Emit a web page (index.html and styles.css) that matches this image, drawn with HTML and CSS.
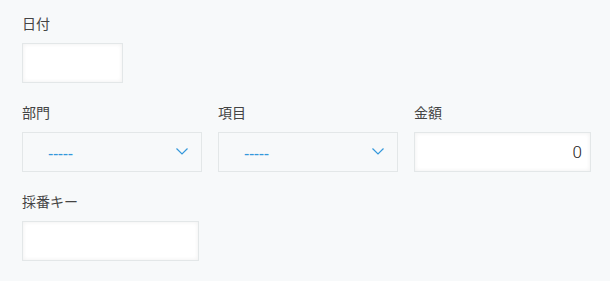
FILE: index.html
```html
<!DOCTYPE html>
<html lang="ja">
<head>
  <meta charset="UTF-8" />
  <meta name="viewport" content="width=device-width, initial-scale=1.0"/>
  <title>レコード編集</title>
  <link rel="stylesheet" href="styles.css">
</head>
<body>
  <div class="record">
    <div class="row">
      <div class="field">
        <div class="label">日付</div>
        <div class="input input-date"></div>
      </div>
    </div>

    <div class="row">
      <div class="field">
        <div class="label">部門</div>
        <div class="select">
          <span class="select-value">-----</span>
          <svg class="chevron" width="12" height="7" viewBox="0 0 12 7">
            <path d="M0.5 0.5 L6 6 L11.5 0.5" fill="none" stroke="#3498db" stroke-width="1.2"/>
          </svg>
        </div>
      </div>
      <div class="field">
        <div class="label">項目</div>
        <div class="select">
          <span class="select-value">-----</span>
          <svg class="chevron" width="12" height="7" viewBox="0 0 12 7">
            <path d="M0.5 0.5 L6 6 L11.5 0.5" fill="none" stroke="#3498db" stroke-width="1.2"/>
          </svg>
        </div>
      </div>
      <div class="field">
        <div class="label">金額</div>
        <div class="input input-number">0</div>
      </div>
    </div>

    <div class="row">
      <div class="field">
        <div class="label">採番キー</div>
        <div class="input input-text"></div>
      </div>
    </div>
  </div>
</body>
</html>
```

FILE: styles.css
```css
* {
  box-sizing: border-box;
}

body {
  margin: 0;
  background-color: #f7f9fa;
  font-family: 'Liberation Sans', 'Noto Sans CJK JP', sans-serif;
  color: #444;
}

.record {
  padding: 14px 22px 0;
}

.row {
  display: flex;
  gap: 16px;
  margin-bottom: 20px;
}

.label {
  font-size: 14px;
  line-height: 20px;
  margin-bottom: 9px;
}

.input {
  height: 40px;
  border: 1px solid #e3e7e8;
  background-color: #fff;
  box-shadow: inset 0 0 4px rgba(0, 0, 0, 0.07);
}

.input-date {
  width: 101px;
}

.input-text {
  width: 177px;
}

.input-number {
  width: 177px;
  padding: 0 8px;
  text-align: right;
  font-family: Roboto, 'Liberation Sans', sans-serif;
  font-weight: 300;
  font-size: 17px;
  line-height: 38px;
  color: #222;
}

.select {
  width: 180px;
  height: 40px;
  border: 1px solid #e3e7e8;
  background-color: #f7f9fa;
  display: flex;
  align-items: center;
  justify-content: space-between;
  padding: 0 13px 0 25px;
}

.select-value {
  color: #3498db;
  font-size: 16px;
  letter-spacing: -0.4px;
  line-height: 20px;
  padding-top: 4px;
}

.chevron {
  display: block;
  margin-top: -2px;
}
```
